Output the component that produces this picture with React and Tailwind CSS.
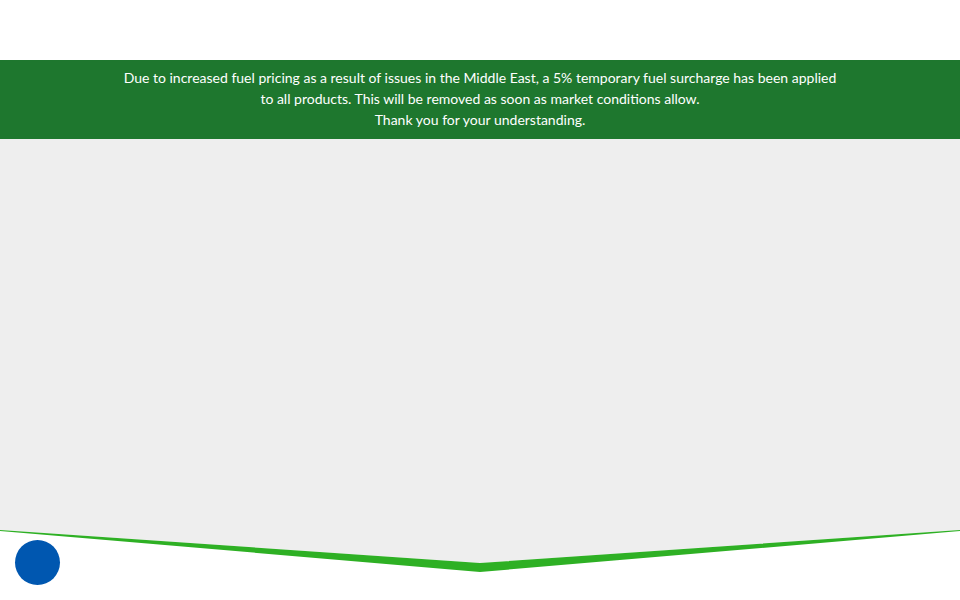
import React from "react";

const App = () => {
  return (
    <div className="relative min-h-[600px] w-full bg-white font-['Lato',sans-serif]">
      {/* Top header space */}
      <div className="h-[60px] bg-white" />

      {/* Surcharge notice */}
      <div className="bg-[#1e772e] px-4 pb-[9px] pt-[7px] text-center text-[14px] leading-[21px] text-white">
        <p>
          Due to increased fuel pricing as a result of issues in the Middle East, a 5% temporary fuel surcharge has been applied
          <br />
          to all products. This will be removed as soon as market conditions allow.
        </p>
        <p>Thank you for your understanding.</p>
      </div>

      {/* Main gray area */}
      <div className="h-[391px] bg-[#eeeeee]" />

      {/* V-shaped bottom edge */}
      <svg viewBox="0 0 960 44" preserveAspectRatio="none" className="block h-[44px] w-full">
        <polygon points="0,0 960,0 480,33" fill="#eeeeee" />
        <polygon points="0,0 480,33 960,0 960,1 480,42 0,1" fill="#2eb024" />
      </svg>

      <div className="h-[26px]" />

      {/* Floating chat button */}
      <button className="absolute bottom-[15px] left-[15px] h-[45px] w-[45px] rounded-full bg-[#0057b0]" />
    </div>
  );
};

export default App;
